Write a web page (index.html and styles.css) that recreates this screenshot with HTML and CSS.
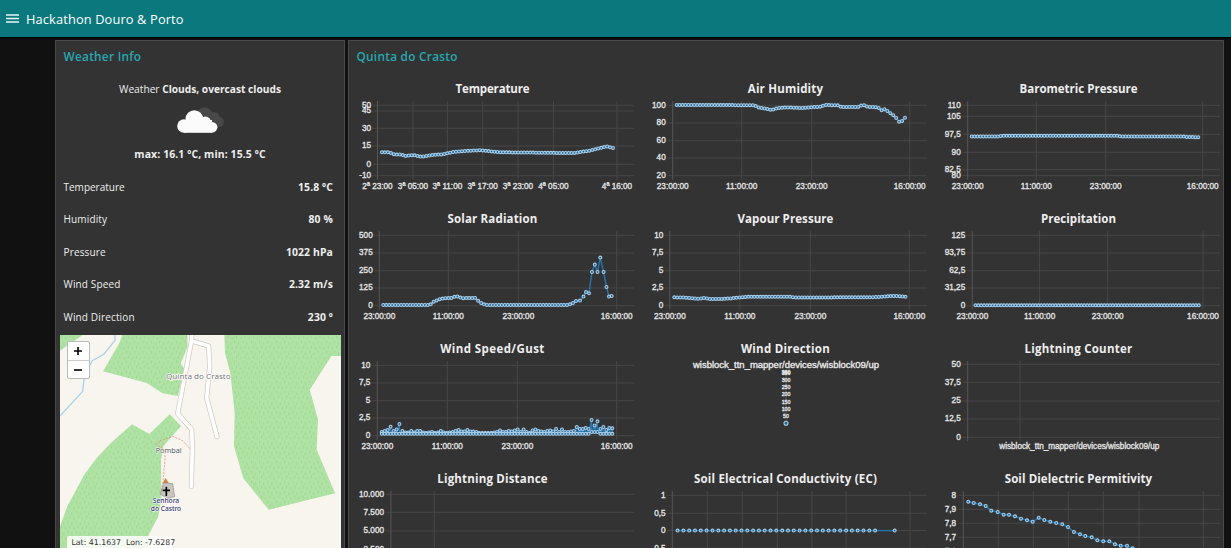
FILE: index.html
```html
<!DOCTYPE html>
<html lang="en">
<head>
<meta charset="utf-8">
<title>Hackathon Douro &amp; Porto</title>
<link rel="stylesheet" href="styles.css">
</head>
<body>
<header class="toolbar">
  <svg class="menu-icon" width="13" height="9" viewBox="0 0 13 9"><path d="M0 1h13M0 4.5h13M0 8h13" stroke="#e6f6f6" stroke-width="1.3"/></svg>
  <h1 class="toolbar-title">Hackathon Douro &amp; Porto</h1>
</header>
<main class="board">
  <section class="panel weather">
    <h2 class="panel-title">Weather Info</h2>
    <div class="summary">
      <p class="summary-text">Weather <b>Clouds, overcast clouds</b></p>
      <svg class="clouds" width="48" height="28" viewBox="0 0 48 28">
        <g fill="#484848"><circle cx="27.500" cy="10" r="8.500"/><circle cx="37" cy="11.500" r="5.500"/><circle cx="42" cy="16" r="5"/><rect x="26" y="11" width="17" height="10"/></g>
        <g fill="#fbfbfb"><circle cx="7" cy="20" r="6.800"/><circle cx="17.300" cy="13" r="8.800"/><circle cx="28.500" cy="16" r="5.400"/><circle cx="35" cy="21.300" r="5.400"/><rect x="7" y="14" width="28" height="12.800"/></g>
      </svg>
      <p class="range">max: 16.1 ºC, min: 15.5 ºC</p>
    </div>
    <dl class="readings">
      <div class="reading"><dt>Temperature</dt><dd>15.8 ºC</dd></div>
      <div class="reading"><dt>Humidity</dt><dd>80 %</dd></div>
      <div class="reading"><dt>Pressure</dt><dd>1022 hPa</dd></div>
      <div class="reading"><dt>Wind Speed</dt><dd>2.32 m/s</dd></div>
      <div class="reading"><dt>Wind Direction</dt><dd>230 º</dd></div>
    </dl>
    <div class="map">
      <svg class="map-canvas" width="281" height="213" viewBox="30 16 843 639">
        <defs><pattern id="grass" width="25" height="30" patternUnits="userSpaceOnUse"><rect width="25" height="30" fill="#afe3a3"/><path d="M4 3v8M16 8v8M10 18v8M22 22v8" stroke="#9bd090" stroke-width="2.500"/></pattern></defs>
        <rect x="30" y="16" width="843" height="640" fill="#f8f5ef"/>
        <g fill="url(#grass)">
          <path d="M30 16H98L30 63z"/>
          <path d="M217 16H412L413 50L392 102L402 116L384 199L338 191L290 160L159 125L207 42z"/>
          <path d="M523 16H873V79H844L779 181L804 269L800 360L855 491L656 540L580 446L552 350L554 250L541 130L525 70z"/>
          <path d="M246 284L298 313L359 254L393 289L340 349L333 390L334 510L325 560L294 620V656H30V589L52 530L104 433L140 385L180 342z"/>
        </g>
        <path d="M195 16V32L162 73L127 93L108 125L102 150L98 185L30 259" fill="none" stroke="#a6d3e8" stroke-width="4"/>
        <g fill="none" stroke-linecap="round" stroke-linejoin="round">
          <path d="M426 10L424 36L383 252L425 299L427 350L424 470M426 34L476 49L479 110L470 205L501 321" stroke="#cbc7c1" stroke-width="15"/>
          <path d="M426 10L424 36L383 252L425 299L427 350L424 470M426 34L476 49L479 110L470 205L501 321" stroke="#fff" stroke-width="11"/>
        </g>
        <path d="M420 357L398 333L368 320L326 335L319 346L346 360L344 400L339 456L332 490" fill="none" stroke="#f08d80" stroke-width="2.500" stroke-dasharray="6 4"/>
        <path d="M341 460L368 462L374 501L355 506L331 494z" fill="#c9c5c2" stroke="#8e8a88" stroke-width="2"/>
        <path d="M347 445L356 460H338z" fill="#cb8644"/>
        <path d="M349 471V499M338 482H360" stroke="#000" stroke-width="5"/>
        <g class="map-label" text-anchor="middle">
          <text x="445" y="147" textLength="194" lengthAdjust="spacingAndGlyphs" class="place">Quinta do Crasto</text>
          <text x="356" y="370" textLength="78" lengthAdjust="spacingAndGlyphs" class="spot">Pombal</text>
          <text x="348" y="521" textLength="79" lengthAdjust="spacingAndGlyphs" class="chapel">Senhora</text>
          <text x="348" y="543" textLength="91" lengthAdjust="spacingAndGlyphs" class="chapel">do Castro</text>
        </g>
      </svg>
      <div class="zoom-control">
        <button class="zoom-button"><svg width="10" height="10" viewBox="0 0 10 10"><path d="M1 5h8M5 1v8" stroke="#000" stroke-width="1.600"/></svg></button>
        <button class="zoom-button"><svg width="10" height="10" viewBox="0 0 10 10"><path d="M1 5h8" stroke="#000" stroke-width="1.600"/></svg></button>
      </div>
      <div class="coords">Lat: 41.1637&nbsp; Lon: -7.6287</div>
    </div>
  </section>
  <section class="panel station">
    <h2 class="panel-title">Quinta do Crasto</h2>
    <div class="charts" id="charts"></div>
  </section>
</main>
<script src="charts.js"></script>
</body>
</html>
```
FILE: styles.css
```css
* { box-sizing: border-box; }
body {
  margin: 0;
  height: 548px;
  overflow: hidden;
  background: #111;
  color: #eee;
  font-family: "Open Sans", "Noto Sans", sans-serif;
  font-size: 10.2px;
}
h1, h2, h3, p, dl, dd { margin: 0; }
.toolbar {
  height: 37px;
  padding: 0 6px;
  display: flex;
  align-items: center;
  gap: 7px;
  background: #0a787c;
  box-shadow: 0 1px 2px #000;
}
.toolbar-title { font-size: 12.8px; font-weight: 400; line-height: 37px; padding-top: 1px; color: #fff; letter-spacing: 0.14px; }
.board {
  display: flex;
  gap: 3px;
  height: 511px;
  padding: 3px 7px 0 55px;
}
.panel { background: #333; border: 1px solid #4a4a4a; border-bottom: 0; overflow: hidden; }
.weather { width: 290px; display: flex; flex-direction: column; }
.station { flex: 1; }
.panel-title { height: 34px; padding: 5px 7px 0 7.5px; line-height: 21px; font-size: 11.8px; font-weight: 600; letter-spacing: 0.28px; color: #25a9b2; }
.summary { height: 95px; display: flex; flex-direction: column; align-items: center; }
.summary-text { line-height: 16px; margin-top: 6px; }
.summary-text b { font-weight: 700; }
.clouds { margin-top: 9px; margin-left: 2px; }
.range { line-height: 16px; margin-top: 12px; font-size: 10.4px; font-weight: 700; letter-spacing: 0.13px; }
.readings { padding: 0 11px 0 7.5px; height: 165px; }
.reading { display: flex; justify-content: space-between; align-items: center; height: 32.5px; padding-top: 1px; }
.reading dt { font-size: 10px; }
.reading:nth-child(n+2) dt { letter-spacing: 0.15px; }
.reading dd { font-size: 10.4px; font-weight: 700; letter-spacing: 0.12px; }
.map { position: relative; width: 281px; height: 213px; flex: none; margin-left: 3.5px; }
.map-canvas { display: block; }
.map-label { font-family: "Noto Sans", sans-serif; paint-order: stroke; }
.place { font-size: 23px; fill: #777; stroke: #fff; stroke-width: 4px; }
.spot { font-size: 22px; fill: #555; stroke: #fff; stroke-width: 3px; }
.chapel { font-size: 20px; fill: #31316b; stroke: #fff; stroke-width: 3px; font-weight: 500; }
.zoom-control { position: absolute; left: 7px; top: 6px; width: 23px; border: 1px solid #bbb; border-radius: 2px; background: #fff; display: grid; grid-template-rows: 18px 18px; }
.zoom-button { border: 0; padding: 0; background: none; display: grid; place-items: center; }
.zoom-button + .zoom-button { border-top: 1px solid #ccc; }
.coords { position: absolute; left: 7px; bottom: 0; width: 105px; height: 12px; padding-left: 5px; background: rgba(255,255,255,.85); color: #333; font: 7.8px/14px "DejaVu Sans", sans-serif; white-space: nowrap; border-radius: 2px 2px 0 0; }
.charts { display: grid; grid-template-columns: repeat(3, 287px); grid-auto-rows: 130px; column-gap: 6px; }
.chart-title { height: 20px; line-height: 28px; text-align: center; font-size: 11.5px; font-weight: 700; white-space: nowrap; }
.plot { display: block; overflow: visible; }
.grid { stroke: #474747; stroke-width: 1; fill: none; }
.axis { stroke: #565656; stroke-width: 1; fill: none; }
.tick { font-family: "Liberation Sans", sans-serif; font-size: 8.7px; fill: #e4e4e4; stroke: #e4e4e4; stroke-width: .35px; }
.tick-small { font-size: 5.5px; }
.caption { font-size: 9.5px; fill: #f4f4f4; }
.series { fill: none; stroke: #2477b0; stroke-width: 1.4; }
.dot { fill: #28618c; stroke: #a6cfeb; stroke-width: 1.1; }
```
FILE: charts.js
```javascript
const rowY = [10.3, 28, 45.7, 63, 80.7];
const clock = ['23:00:00', '11:00:00', '23:00:00', '16:00:00'];
const zip = (labels, pos) => labels.map((l, i) => [l, pos[i]]);

// Spread n samples along a polyline of [x, y] knots.
function samples(knots, n) {
  const x0 = knots[0][0], x1 = knots[knots.length - 1][0];
  return Array.from({ length: n }, (_, i) => {
    const x = x0 + (x1 - x0) * i / (n - 1);
    let k = 1;
    while (k < knots.length - 1 && knots[k][0] < x) k++;
    const [a, b] = [knots[k - 1], knots[k]];
    const t = (x - a[0]) / (b[0] - a[0]);
    return [x, a[1] + (b[1] - a[1]) * t];
  });
}

const gust = [
  77, 76, 75, 71.7, 76, 74.5, 69, 76, 77.5, 77.5, 76, 77.5, 76, 76, 77.5, 78, 77.5, 77, 78, 77.5,
  76, 77.5, 78, 77.5, 77, 76, 75, 76.5, 76.5, 75, 76.5, 76.5, 77, 78, 78, 78, 78, 78, 77.5, 77,
  75.5, 77, 77, 76, 76.5, 75.5, 74.5, 77, 74.5, 77, 78, 75.5, 74.5, 76, 76.5, 77, 76, 75.5, 76.5, 74,
  77, 74.5, 77, 77, 76.5, 76, 72, 74, 74, 73, 74, 65, 70.5, 66.3, 74, 72, 75, 73, 73.3];
const wind = gust.flatMap((y, i) => {
  const x = 32.7 + i * 230.6 / (gust.length - 1);
  return [[x, y], [x, i > 70 && i < 74 ? 77 : 78.8]];
});

const solar = samples([[34.3, 80], [81, 80], [84, 77], [90, 74.3], [96, 73.2], [103, 73], [107, 71], [113, 73.2], [127, 73], [130, 77], [134, 79], [137, 80], [218, 80]], 63);
solar.push([221,79.3],[224,78],[227,76],[231,75.6],[234.5,71.6],[237,67],[240,68.3],[243,47],[245.8,39.6],[248.5,47],[251.3,32.6],[254.6,47],[257.5,62],[260,71.6],[262.7,71]);

const soil = [115,500,131,504,150,508,167,513,184,527,203,531,221,539,237,539,255,544,273,551,291,556,308,560,326,548,343,555,361,560,379,564,397,568,414,576,432,591,450,598,466,603,485,607,502,616,520,619,538,619,555,628,572,632,591,632,608,640];
const soilPoints = [];
for (let i = 0; i < soil.length; i += 2) soilPoints.push([soil[i] / 3 - 5, soil[i + 1] / 3 - 150]);

const charts = [
  { title: 'Temperature', width: 74, y: zip(['50', '45', '30', '15', '0', '-10'], [10.3, 16, 33.3, 51, 69.3, 80.7]), lx: 22,
    x: zip(['2ª 23:00', '3ª 05:00', '3ª 11:00', '3ª 17:00', '3ª 23:00', '4ª 05:00', '4ª 16:00'], [28.5, 64, 98.4, 133.7, 169, 204.4, 268]),
    points: samples([[33,57.3],[40,57.3],[46,59.7],[52,59.5],[56,61],[64,60],[72,61.7],[84,60],[94,59.3],[104,57],[115,56],[131,55.2],[150,57.2],[190,57.7],[225,58],[242,55.5],[251,53],[258,51.5],[264,53]], 79) },
  { title: 'Air Humidity', width: 75.500, y: zip(['100', '80', '60', '40', '20'], rowY), lx: 23.7, x: zip(clock, [30.7, 99.7, 169.7, 267.7]),
    points: samples([[34.7,10],[112,10.2],[116,12.3],[125,14],[130,15],[136,13],[145,12.5],[160,13],[178,11.7],[183,10],[196,10.3],[199,12],[216,12],[221,9.8],[226,11.8],[236,12.3],[239,15.5],[243,14],[248,18],[253,21.3],[257,26.7],[260,26],[263,22.7]], 79) },
  { title: 'Barometric Pressure', width: 118, y: zip(['110', '105', '97,5', '90', '82,5', '80'], [10.3, 21.3, 39.3, 57.3, 74.7, 80.7]), lx: 25.7, x: zip(clock, [32.7, 101.3, 170.7, 267.7]),
    points: samples([[36.7,41.5],[63,41.5],[66,40.8],[182,40.8],[186,41.5],[248,41.5],[251,42],[263.3,42.2]], 79) },
  { title: 'Solar Radiation', width: 90, y: zip(['500', '375', '250', '125', '0'], rowY), lx: 23.7, x: zip(clock, [30.3, 99.3, 169.3, 267.7]), points: solar },
  { title: 'Vapour Pressure', width: 96, y: zip(['10', '7,5', '5', '2,5', '0'], rowY), lx: 21.3, x: zip(clock, [27.8, 97.8, 168.3, 267.3]),
    points: samples([[32.3,72.3],[42,72.5],[57,73.8],[62,73],[68,74],[84,73.8],[105,71.8],[147,71.7],[152,72.4],[230,72.3],[250,71],[256,71],[263.5,71.8]], 79) },
  { title: 'Precipitation', width: 75, y: zip(['125', '93,75', '62,5', '31,25', '0'], rowY), lx: 30.2, x: zip(clock, [37.3, 104.6, 172.6, 268]),
    points: samples([[40.5, 80.3], [263.8, 80.3]], 79) },
  { title: 'Wind Speed/Gust', width: 104.500, y: zip(['10', '7,5', '5', '2,5', '0'], rowY), lx: 21.3, x: zip(clock, [28.3, 98.3, 168.3, 267.7]), points: wind },
  { title: 'Wind Direction', width: 89, radar: true },
  { title: 'Lightning Counter', width: 108, y: zip(['50', '37,5', '25', '12,5', '0'], [9.3, 27.3, 46, 64, 82.3]), lx: 25.7, x: [['', 32.7], ['', 85]], note: 'wisblock_ttn_mapper/devices/wisblock09/up', points: [] },
  { title: 'Lightning Distance', width: 110.500, y: zip(['10.000', '7.500', '5.000', '2.500', '0'], [9.3, 27.3, 46, 64.3, 82.3]), lx: 35, x: [['', 41.9], ['', 85.2]], points: [] },
  { title: 'Soil Electrical Conductivity (EC)', width: 183, y: zip(['1', '0,5', '0', '-0,5', '-1'], [10.3, 28.3, 45.5, 63.3, 81]), lx: 23.5, x: [30.3, 65.3, 100.3, 135.3, 169.9, 204.1, 268].map(x => ['', x]),
    points: [...samples([[35.6, 45.6], [233.1, 45.6]], 35), [252.7, 45.6]] },
  { title: 'Soil Dielectric Permitivity', width: 147.500, y: zip(['8', '7,9', '7,8', '7,7', '7,6'], [10.3, 24.3, 38.3, 52.3, 66.3]), lx: 21, x: [28.3, 63.3, 98.3, 133.3, 168.3, 204, 268.3].map(x => ['', x]), points: soilPoints },
];

const text = (s, x, y, anchor, extra = '', width = 0) =>
  `<text class="tick ${extra}" x="${x}" y="${y}" text-anchor="${anchor}"${width ? ` data-width="${width}"` : ''}>${s}</text>`;
const dot = (p, r = 1.45) => `<circle class="dot" cx="${p[0].toFixed(1)}" cy="${p[1].toFixed(1)}" r="${r}"/>`;

function plot(c) {
  if (c.radar) {
    const marks = ['350', '300', '250', '200', '150', '100', '50'];
    return '<path class="axis" d="M144 17V68"/>' +
      text('wisblock_ttn_mapper/devices/wisblock09/up', 144, 12.5, 'middle', 'caption', 186) +
      text('360', 144, 19, 'middle', 'tick-small') +
      marks.map((m, i) => text(m, 144, 20 + i * 7.15, 'middle', 'tick-small')).join('') + dot([144, 68.3], 2);
  }
  const x0 = c.x[0][1], bottom = c.y[c.y.length - 1][1];
  let s = c.y.map(([l, y]) => `<path class="grid" d="M${x0 - 5} ${y}H285"/>` + text(l, c.lx, y + 2.2, 'end')).join('');
  s += c.x.map(([l, x], i) => `<path class="${i ? 'grid' : 'axis'}" d="M${x} 6V${bottom + 4}"/>` + (l ? text(l, x, 94.2, 'middle') : '')).join('');
  if (c.note) s += text(c.note, 144.3, 94, 'middle', '', 160);
  if (c.points.length) s += `<path class="series" d="M${c.points.map(p => p.map(v => v.toFixed(1)).join(' ')).join('L')}"/>`;
  return s + c.points.map(p => dot(p)).join('');
}

document.getElementById('charts').innerHTML = charts.map(c =>
  `<article class="chart"><h3 class="chart-title"><span data-width="${c.width}">${c.title}</span></h3><svg class="plot" width="287" height="110" viewBox="0 0 287 110">${plot(c)}</svg></article>`).join('');

// Track each title out to its measured width.
document.querySelectorAll('.chart-title span').forEach(t => {
  const gap = (t.dataset.width - t.getBoundingClientRect().width) / t.textContent.length;
  t.style.letterSpacing = gap.toFixed(3) + 'px';
});

// Condense labels slightly, or fit them to a given width.
document.querySelectorAll('.tick').forEach(t => {
  t.setAttribute('textLength', t.dataset.width || t.getComputedTextLength() * 0.94);
  t.setAttribute('lengthAdjust', 'spacingAndGlyphs');
});
```
